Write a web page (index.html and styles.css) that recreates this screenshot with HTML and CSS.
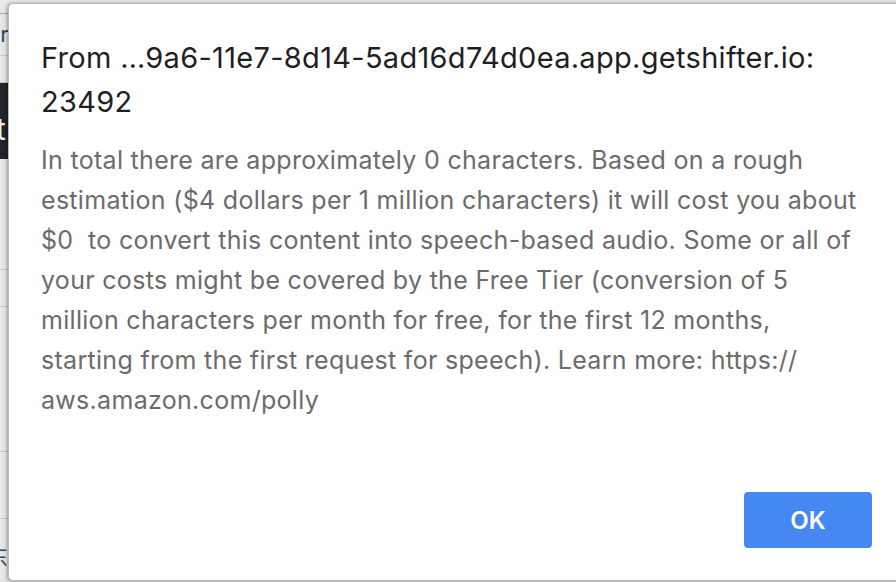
FILE: index.html
```html
<!DOCTYPE html>
<html lang="en">
<head>
    <meta charset="UTF-8">
    <meta name="viewport" content="width=device-width, initial-scale=1.0">
    <title>Polly</title>
    <link rel="stylesheet" href="styles.css">
</head>
<body>

<!-- Seite hinter dem Dialog -->
<div class="page">
    <div class="page-row row-top"></div>
    <div class="page-row row-tab"><span>ar</span></div>
    <div class="page-row row-gap"></div>
    <div class="page-bar"><span>t</span></div>
    <div class="page-row row-a"></div>
    <div class="page-row row-b"></div>
    <div class="page-row row-c"></div>
    <div class="page-row row-d"></div>
    <div class="page-row row-e"><span class="cjk">东</span></div>
</div>

<!-- Alert-Dialog -->
<div class="alert">
    <h2 class="alert-title">From …9a6-11e7-8d14-5ad16d74d0ea.app.getshifter.io:<br>23492</h2>
    <p class="alert-text">In total there are approximately 0 characters. Based on a rough<br>
        estimation ($4 dollars per 1 million characters) it will cost you about<br>
        $0&nbsp; to convert this content into speech-based audio. Some or all of<br>
        your costs might be covered by the Free Tier (conversion of 5<br>
        million characters per month for free, for the first 12 months,<br>
        starting from the first request for speech). Learn more: https://<br>
        aws.amazon.com/polly</p>
    <div class="alert-buttons">
        <button type="button">OK</button>
    </div>
</div>

</body>
</html>
```

FILE: styles.css
```css
body {
    margin: 0;
    width: 896px;
    height: 582px;
    overflow: hidden;
    position: relative;
    background-color: #e8e8e8;
    font-family: Inter, "Liberation Sans", Arial, sans-serif;
}

.page {
    display: flex;
    flex-direction: column;
    width: 60px;
}

.page-row {
    border-bottom: 1px solid #c9c9c9;
    color: #2a4a6a;
    font-size: 22px;
    overflow: hidden;
    white-space: nowrap;
}

.row-top {
    height: 13px;
    border-bottom-color: #a8a8a8;
}

.row-tab {
    height: 41px;
    line-height: 41px;
}

.row-tab span {
    margin-left: -12px;
}

.row-gap {
    height: 26px;
}

.page-bar {
    height: 76px;
    background-color: #22252a;
    color: #f0f0f0;
    font-size: 30px;
    line-height: 76px;
    padding-top: 8px;
    box-sizing: border-box;
}

.page-bar span {
    margin-left: -4px;
}

.row-a {
    height: 110px;
}

.row-b {
    height: 36px;
}

.row-c {
    height: 144px;
}

.row-d {
    height: 66px;
}

.row-e {
    height: 60px;
    border-bottom: none;
}

.cjk {
    font-family: "Noto Sans CJK SC", sans-serif;
    margin-left: -14px;
    line-height: 72px;
}

/* Dialog */
.alert {
    position: absolute;
    top: 3px;
    left: 8px;
    width: 831px;
    height: 544px;
    padding: 0 32px 32px 32px;
    background-color: #fff;
    border: 1px solid #bdbdbd;
    border-radius: 5px;
    box-shadow: -1px 0 3px rgba(0, 0, 0, 0.25), 0 2px 6px rgba(0, 0, 0, 0.2);
    display: flex;
    flex-direction: column;
}

.alert-title {
    margin: 32px 0 0 0;
    font-size: 29px;
    font-weight: normal;
    line-height: 44px;
    letter-spacing: 0.3px;
    color: #1f1f1f;
    white-space: nowrap;
}

.alert-text {
    margin: 16px 0 0 0;
    font-size: 25px;
    line-height: 40px;
    letter-spacing: 0.3px;
    color: #6b6b6b;
    white-space: nowrap;
}

.alert-buttons {
    margin-top: auto;
    display: flex;
    justify-content: flex-end;
}

.alert-buttons button {
    width: 128px;
    height: 56px;
    border: none;
    border-radius: 4px;
    background-color: #4688f1;
    color: #fff;
    font-family: inherit;
    font-size: 24px;
    font-weight: 600;
    cursor: pointer;
}
```
